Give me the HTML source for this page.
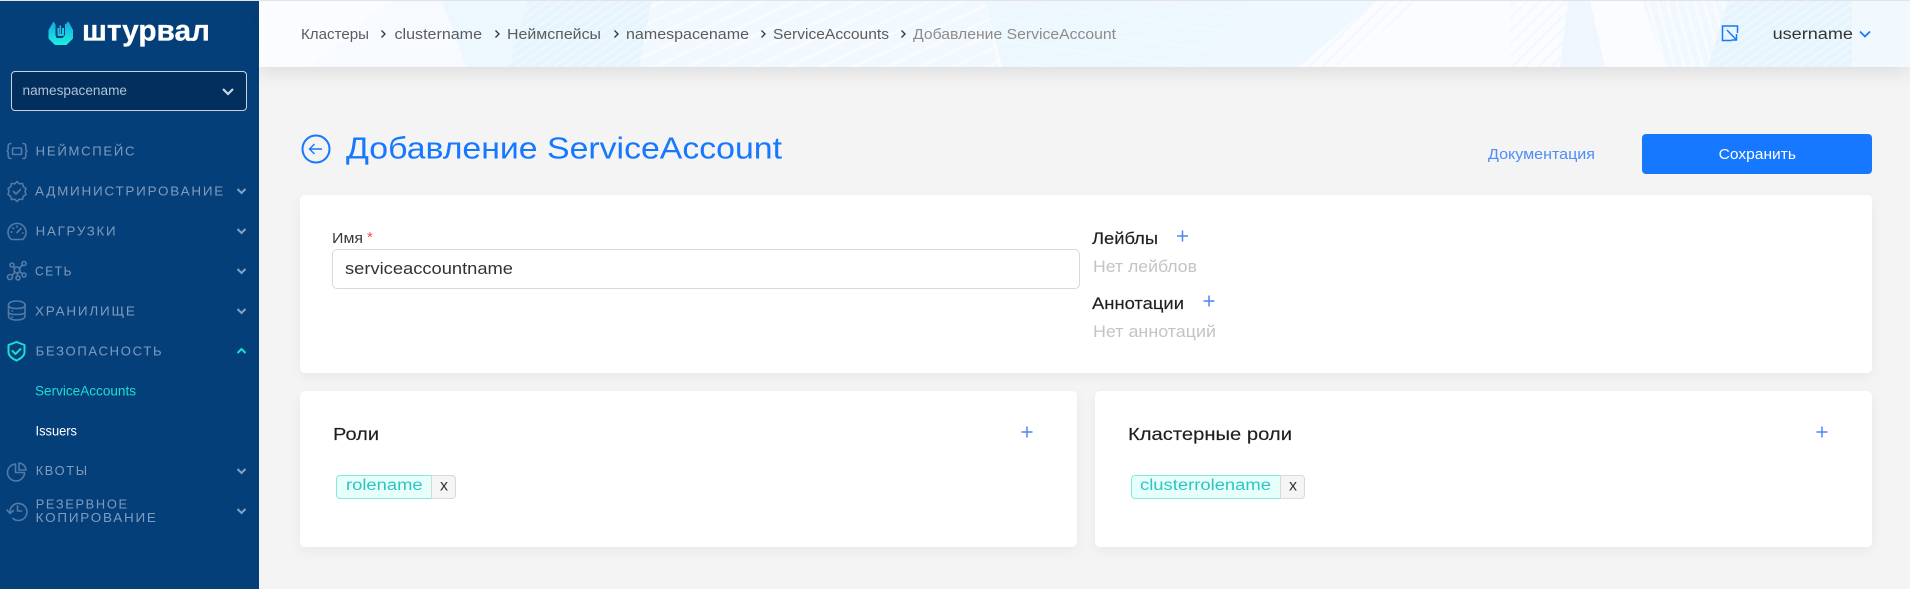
<!DOCTYPE html>
<html lang="ru">
<head>
<meta charset="utf-8">
<title>Добавление ServiceAccount</title>
<style>
html,body{margin:0;padding:0;width:1910px;height:589px;overflow:hidden;background:#f4f4f4;font-family:"Liberation Sans","Noto Sans CJK SC",sans-serif}
.box{position:absolute;box-sizing:border-box}
aside{position:absolute;left:0;top:0;width:259px;height:589px;background:#053f7a}
header{position:absolute;left:259px;top:0;width:1651px;height:67px;box-shadow:0 4px 22px rgba(0,0,0,.11);overflow:hidden;background:#fafcff}
.line{position:absolute;left:0;top:0;width:1910px;height:1px;background:#e3e3e3}
.card{position:absolute;background:#fff;border-radius:5px;box-shadow:0 4px 12px rgba(0,0,0,.05)}
svg.ov{position:absolute;left:0;top:0;pointer-events:none}
text{font-family:"Liberation Sans","Noto Sans CJK SC",sans-serif;white-space:pre}
.m{font-size:13px;fill:#7f9cbd;letter-spacing:1.7px}
.ic{fill:none;stroke:#527aa6;stroke-width:1.6;stroke-linecap:round;stroke-linejoin:round}
.bc{font-size:15px;fill:#5c5c5c}
.chev{fill:none;stroke:#333;stroke-width:1.3}
.mc{fill:none;stroke:#86a2c2;stroke-width:2}
.pl{stroke:#4d84f5;stroke-width:1.5;fill:none}
.h{font-size:17.5px;fill:#1f1f1f;stroke:#1f1f1f;stroke-width:.15}
.mute{font-size:16.5px;fill:#c4c4c4}
.tag{font-size:15.5px;fill:#2cc5c4}
</style>
</head>
<body>
<aside></aside>
<header>
<svg width="1651" height="67" viewBox="259 0 1651 67" xmlns="http://www.w3.org/2000/svg">
<defs>
<pattern id="s1" width="7" height="7" patternUnits="userSpaceOnUse" patternTransform="rotate(-35)"><rect width="7" height="7" fill="#e5f4fd"/><rect width="7" height="2.5" fill="#edf7fe"/></pattern>
<pattern id="s2" width="14" height="14" patternUnits="userSpaceOnUse" patternTransform="rotate(-25)"><rect width="14" height="14" fill="#f1f8fe"/><rect width="14" height="3" fill="#f8fcff"/></pattern>
<pattern id="s3" width="20" height="20" patternUnits="userSpaceOnUse" patternTransform="rotate(8)"><rect width="20" height="20" fill="#edf7fe"/><rect width="20" height="1" fill="#f4faff"/></pattern>
<pattern id="s4" width="9" height="9" patternUnits="userSpaceOnUse" patternTransform="rotate(-45)"><rect width="9" height="9" fill="#fafcff"/><rect width="9" height="2" fill="#f3f8fd"/></pattern>
<pattern id="s5" width="9" height="9" patternUnits="userSpaceOnUse" patternTransform="rotate(75)"><rect width="9" height="9" fill="#f1f8fe"/><rect width="9" height="3" fill="#f9fcff"/></pattern>
</defs>
<polygon points="389,0 442,0 470,67 310,67" fill="#f7fbff"/>
<polygon points="442,0 528,0 509,67 466,67" fill="#ecf7fe"/>
<polygon points="528,0 652,0 639,67 509,67" fill="url(#s1)"/>
<polygon points="652,0 985,0 999,67 639,67" fill="url(#s2)"/>
<polygon points="985,0 1246,0 1202,67 1002,67" fill="url(#s3)"/>
<polygon points="1246,0 1377,0 1299,67 1202,67" fill="#eff8fe"/>
<polygon points="1377,0 1420,0 1340,67 1299,67" fill="url(#s4)"/>
<polygon points="1510,0 1568,0 1560,67 1510,67" fill="url(#s4)"/>
<polygon points="1568,0 1590,0 1605,67 1560,67" fill="#eff6fd"/>
<polygon points="1590,0 1642,0 1665,67 1605,67" fill="#fbfcff"/>
<polygon points="1642,0 1728,0 1708,67 1665,67" fill="url(#s5)"/>
<polygon points="1728,0 1852,0 1852,67 1708,67" fill="url(#s1)"/>
<rect x="1852" y="0" width="58" height="67" fill="#f2f9fe"/>
</svg>
</header>
<div class="line"></div>
<div class="box" style="left:11px;top:71px;width:236px;height:40px;background:#032f5e;border:1px solid #c9d3de;border-radius:4px"></div>
<div class="box" style="left:1642px;top:134px;width:230px;height:40px;background:#1677ff;border-radius:4px"></div>
<div class="card" style="left:300px;top:195px;width:1572px;height:178px"></div>
<div class="box" style="left:332px;top:249px;width:748px;height:40px;border:1px solid #d9d9d9;border-radius:5px;background:#fff"></div>
<div class="card" style="left:300px;top:391px;width:777px;height:156px"></div>
<div class="card" style="left:1095px;top:391px;width:777px;height:156px"></div>
<div class="box" style="left:336px;top:475px;width:96px;height:24px;background:#e6fffb;border:1px solid #87e8de;border-radius:4px 0 0 4px"></div>
<div class="box" style="left:431px;top:475px;width:25px;height:24px;background:#f5f5f5;border:1px solid #d9d9d9;border-radius:0 4px 4px 0"></div>
<div class="box" style="left:1131px;top:475px;width:150px;height:24px;background:#e6fffb;border:1px solid #87e8de;border-radius:4px 0 0 4px"></div>
<div class="box" style="left:1280px;top:475px;width:25px;height:24px;background:#f5f5f5;border:1px solid #d9d9d9;border-radius:0 4px 4px 0"></div>

<svg class="ov" width="1910" height="589" viewBox="0 0 1910 589" xmlns="http://www.w3.org/2000/svg">
<defs>
<linearGradient id="lg" x1="0" y1="0" x2="0" y2="1"><stop offset="0" stop-color="#14a9e2"/><stop offset="1" stop-color="#1cf0e0"/></linearGradient>
</defs>
<!-- logo -->
<path d="M53.500 21.500 48.500 30v8.500L55 45h11.500l6.500-6.500V30l-4.500-8.500-3.500 3V35l-2.500 3h-6L55.500 35V24.500z" fill="url(#lg)"/>
<path d="M57.500 28v6.500q0 1.500 1.500 1.500h3.500q1.500 0 1.500-1.500V28h-2v6h-1V25.500h-1.500V34h-.5V28z" fill="#1cc8e2"/>
<text x="82" y="40.700" font-size="30" font-weight="700" fill="#fff" stroke="#fff" stroke-width=".3" textLength="128" lengthAdjust="spacingAndGlyphs">штурвал</text>

<!-- select -->
<text x="22.500" y="95" font-size="13.500" fill="#afc2d6" textLength="104.500" lengthAdjust="spacingAndGlyphs">namespacename</text>
<path d="M223 89l5 5 5-5" fill="none" stroke="#cfd8e2" stroke-width="2.200"/>

<!-- menu -->
<text class="m" x="35.700" y="155.500" textLength="100.500" lengthAdjust="spacingAndGlyphs">НЕЙМСПЕЙС</text>
<text class="m" x="35" y="195.500" textLength="190" lengthAdjust="spacingAndGlyphs">АДМИНИСТРИРОВАНИЕ</text>
<text class="m" x="35.700" y="235.500" textLength="81.600" lengthAdjust="spacingAndGlyphs">НАГРУЗКИ</text>
<text class="m" x="35" y="275.500" textLength="38" lengthAdjust="spacingAndGlyphs">СЕТЬ</text>
<text class="m" x="35" y="315.500" textLength="101.700" lengthAdjust="spacingAndGlyphs">ХРАНИЛИЩЕ</text>
<text class="m" x="35.700" y="355.500" textLength="127.600" lengthAdjust="spacingAndGlyphs">БЕЗОПАСНОСТЬ</text>
<text x="35" y="395.500" font-size="13.500" fill="#1adfd0" textLength="101" lengthAdjust="spacingAndGlyphs">ServiceAccounts</text>
<text x="35.500" y="435.500" font-size="13.500" fill="#fff" textLength="41.500" lengthAdjust="spacingAndGlyphs">Issuers</text>
<text class="m" x="35.700" y="475.200" textLength="53" lengthAdjust="spacingAndGlyphs">КВОТЫ</text>
<text class="m" x="35.700" y="508.500" textLength="93" lengthAdjust="spacingAndGlyphs">РЕЗЕРВНОЕ</text>
<text class="m" x="35.700" y="522.200" textLength="122" lengthAdjust="spacingAndGlyphs">КОПИРОВАНИЕ</text>

<path class="mc" d="M237.500 189l4 4 4-4M237.500 229l4 4 4-4M237.500 269l4 4 4-4M237.500 309l4 4 4-4M237.500 469l4 4 4-4M237.500 509l4 4 4-4"/>
<path d="M237.500 353l4-4 4 4" fill="none" stroke="#1adfd0" stroke-width="2"/>

<!-- icons -->
<g class="ic">
<path d="M11 143.500c-2 0-2.800 .8-2.800 2.800v2.200c0 1.500-.7 2.500-1.200 2.500 .5 0 1.200 1 1.200 2.500v2.200c0 2 .8 2.800 2.800 2.800M23 143.500c2 0 2.800 .8 2.800 2.800v2.200c0 1.500 .7 2.500 1.200 2.500-.5 0-1.200 1-1.200 2.500v2.200c0 2-.8 2.800-2.800 2.800"/>
<rect x="12.500" y="148" width="9" height="6.500" rx="1"/>
<path d="M17 181.500l2.200 2.300 3.300-.3 .8 3.200 2.700 1.800-1 3 1 3-2.700 1.800-.8 3.200-3.300-.3-2.200 2.300-2.200-2.300-3.300 .3-.8-3.200-2.700-1.800 1-3-1-3 2.700-1.800 .8-3.200 3.300 .3z"/>
<path d="M13.500 191.500l2.500 2.500 4.500-4.500"/>
<path d="M11.500 239.500a9 9 0 1 1 11 0z"/>
<path d="M17 232.500l4-4M11 232h1M17 226v1M22.500 233h.5M13 228l.5 .5"/>
<circle cx="12" cy="265" r="2"/><circle cx="24" cy="263.500" r="2"/><circle cx="10" cy="277" r="2.500"/><circle cx="18" cy="278" r="2"/><circle cx="24" cy="275" r="2"/><circle cx="17" cy="270" r="3"/>
<path d="M13.500 266.500l1.500 1.500M22.500 265l-3.500 3.500M12 275.500l3-3.500M17.500 273v3M22.500 274l-3-2.500"/>
<path d="M8.500 305c0-2.500 3.500-4 8.200-4s8.300 1.500 8.300 4v11c0 2.500-3.500 4-8.300 4s-8.200-1.500-8.200-4z"/>
<path d="M8.500 305c0 2.500 3.500 3.500 8.200 3.500s8.300-1 8.300-3.500M8.500 312c0 2 3.500 2.500 8.200 2.500s8.300-.5 8.300-2.500M12 311h.5M12 317h.5"/>
<path d="M16.500 342l8 3v7c0 4-3.500 6.500-8 8.500-4.500-2-8-4.500-8-8.500v-7z" stroke="#1adfd0" stroke-width="2"/>
<path d="M12.500 351l3 3 5-5" stroke="#1adfd0" stroke-width="2"/>
<path d="M24.500 472.500a8.500 8.500 0 1 1-9-8.500v8.500z"/>
<path d="M19 463a7.500 7.500 0 0 1 7 7h-7z"/>
<path d="M10 513a8.500 8.500 0 1 1 3 5.500"/>
<path d="M7 510l3 3.500 3.500-3M17.500 506v5h4"/>
</g>

<!-- breadcrumbs -->
<text class="bc" x="301" y="39" textLength="68" lengthAdjust="spacingAndGlyphs">Кластеры</text>
<path class="chev" d="M381.500 30.500l3.500 3.500-3.500 3.500"/>
<text class="bc" x="394.500" y="39" textLength="87.500" lengthAdjust="spacingAndGlyphs">clustername</text>
<path class="chev" d="M495.500 30.500l3.500 3.500-3.500 3.500"/>
<text class="bc" x="507" y="39" textLength="94" lengthAdjust="spacingAndGlyphs">Неймспейсы</text>
<path class="chev" d="M614.500 30.500l3.500 3.500-3.500 3.500"/>
<text class="bc" x="626" y="39" textLength="123" lengthAdjust="spacingAndGlyphs">namespacename</text>
<path class="chev" d="M761.500 30.500l3.500 3.500-3.500 3.500"/>
<text class="bc" x="773" y="39" textLength="116" lengthAdjust="spacingAndGlyphs">ServiceAccounts</text>
<path class="chev" d="M901.500 30.500l3.500 3.500-3.500 3.500"/>
<text class="bc" x="913" y="39" textLength="203" lengthAdjust="spacingAndGlyphs" style="fill:#8c8c8c">Добавление ServiceAccount</text>

<!-- top right -->
<path d="M1737.500 33v-7h-15v14.500h9" fill="none" stroke="#1677ff" stroke-width="1.500"/>
<path d="M1727 30l9 9.500M1736.500 34v6h-5" fill="none" stroke="#1677ff" stroke-width="1.500"/>
<text x="1772.600" y="39" font-size="15.500" fill="#333" textLength="80.400" lengthAdjust="spacingAndGlyphs">username</text>
<path d="M1860 31.500l5 5 5-5" fill="none" stroke="#1677ff" stroke-width="1.800"/>

<!-- title -->
<circle cx="316" cy="149" r="13.500" fill="none" stroke="#1677ff" stroke-width="2"/>
<path d="M322 149h-12M314.500 144l-5 5 5 5" fill="none" stroke="#1677ff" stroke-width="1.400"/>
<text x="346" y="158.500" font-size="30.500" fill="#1677ff" textLength="436" lengthAdjust="spacingAndGlyphs">Добавление ServiceAccount</text>

<text x="1488" y="159" font-size="15" fill="#4d8df7" textLength="107" lengthAdjust="spacingAndGlyphs">Документация</text>
<text x="1718.600" y="159" font-size="15" fill="#fff" textLength="77.400" lengthAdjust="spacingAndGlyphs">Сохранить</text>

<!-- form -->
<text x="332" y="243" font-size="15" fill="#3a3a3a" textLength="31" lengthAdjust="spacingAndGlyphs">Имя</text>
<text x="367" y="242" font-size="15" fill="#ff4d4f">*</text>
<text x="345" y="274" font-size="16.500" fill="#333" textLength="168" lengthAdjust="spacingAndGlyphs">serviceaccountname</text>

<text class="h" x="1092" y="244" style="font-size:16.500px" textLength="66" lengthAdjust="spacingAndGlyphs">Лейблы</text>
<path class="pl" d="M1177 236h11M1182.500 230.500v11"/>
<text class="mute" x="1093" y="272" textLength="104" lengthAdjust="spacingAndGlyphs">Нет лейблов</text>
<text class="h" x="1092" y="309" style="font-size:16.500px" textLength="92" lengthAdjust="spacingAndGlyphs">Аннотации</text>
<path class="pl" d="M1203.500 301h11M1209 295.500v11"/>
<text class="mute" x="1093" y="337" textLength="123" lengthAdjust="spacingAndGlyphs">Нет аннотаций</text>

<!-- roles -->
<text class="h" x="333" y="440" textLength="46" lengthAdjust="spacingAndGlyphs">Роли</text>
<path class="pl" d="M1021.500 432h11M1027 426.500v11"/>
<text class="tag" x="346" y="490" textLength="76.600" lengthAdjust="spacingAndGlyphs">rolename</text>
<text x="440" y="490.500" font-size="16" fill="#333">x</text>

<text class="h" x="1128" y="440" textLength="164" lengthAdjust="spacingAndGlyphs">Кластерные роли</text>
<path class="pl" d="M1816.500 432h11M1822 426.500v11"/>
<text class="tag" x="1140" y="490" textLength="131" lengthAdjust="spacingAndGlyphs">clusterrolename</text>
<text x="1289" y="490.500" font-size="16" fill="#333">x</text>
</svg>
</body>
</html>
